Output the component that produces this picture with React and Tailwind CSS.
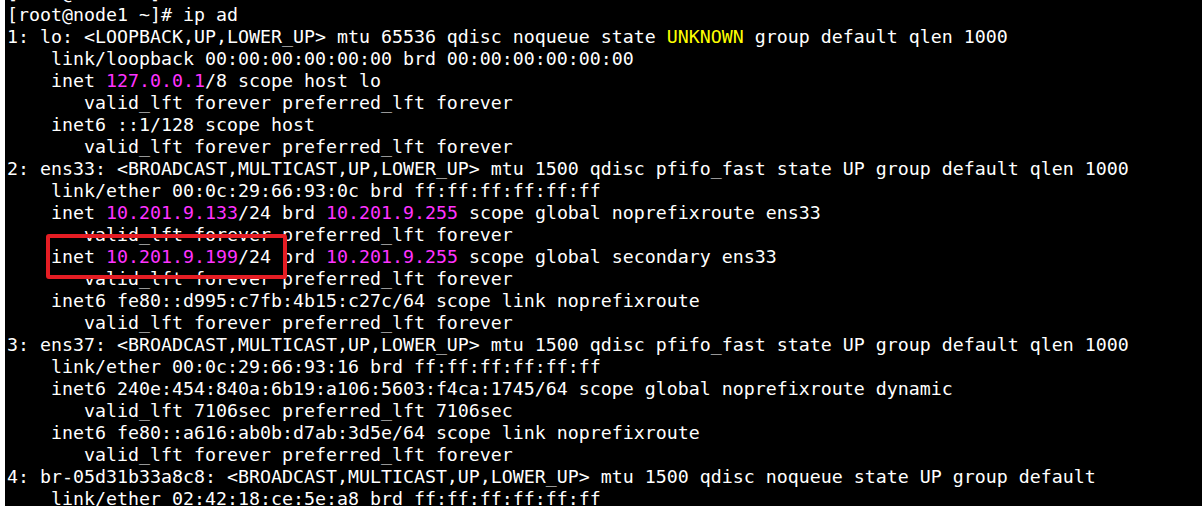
const M = "m";
const Y = "y";

const lines = [
  [["[root@node1 ~]#"]],
  [["[root@node1 ~]# ip ad"]],
  [["1: lo: <LOOPBACK,UP,LOWER_UP> mtu 65536 qdisc noqueue state "], ["UNKNOWN", Y], [" group default qlen 1000"]],
  [["    link/loopback 00:00:00:00:00:00 brd 00:00:00:00:00:00"]],
  [["    inet "], ["127.0.0.1", M], ["/8 scope host lo"]],
  [["       valid_lft forever preferred_lft forever"]],
  [["    inet6 ::1/128 scope host"]],
  [["       valid_lft forever preferred_lft forever"]],
  [["2: ens33: <BROADCAST,MULTICAST,UP,LOWER_UP> mtu 1500 qdisc pfifo_fast state UP group default qlen 1000"]],
  [["    link/ether 00:0c:29:66:93:0c brd ff:ff:ff:ff:ff:ff"]],
  [["    inet "], ["10.201.9.133", M], ["/24 brd "], ["10.201.9.255", M], [" scope global noprefixroute ens33"]],
  [["       valid_lft forever preferred_lft forever"]],
  [["    inet "], ["10.201.9.199", M], ["/24 brd "], ["10.201.9.255", M], [" scope global secondary ens33"]],
  [["       valid_lft forever preferred_lft forever"]],
  [["    inet6 fe80::d995:c7fb:4b15:c27c/64 scope link noprefixroute"]],
  [["       valid_lft forever preferred_lft forever"]],
  [["3: ens37: <BROADCAST,MULTICAST,UP,LOWER_UP> mtu 1500 qdisc pfifo_fast state UP group default qlen 1000"]],
  [["    link/ether 00:0c:29:66:93:16 brd ff:ff:ff:ff:ff:ff"]],
  [["    inet6 240e:454:840a:6b19:a106:5603:f4ca:1745/64 scope global noprefixroute dynamic"]],
  [["       valid_lft 7106sec preferred_lft 7106sec"]],
  [["    inet6 fe80::a616:ab0b:d7ab:3d5e/64 scope link noprefixroute"]],
  [["       valid_lft forever preferred_lft forever"]],
  [["4: br-05d31b33a8c8: <BROADCAST,MULTICAST,UP,LOWER_UP> mtu 1500 qdisc noqueue state UP group default"]],
  [["    link/ether 02:42:18:ce:5e:a8 brd ff:ff:ff:ff:ff:ff"]],
];

function Seg({ text, color }) {
  if (color === M) return <span className="text-[#ff33ff]">{text}</span>;
  if (color === Y) return <span className="text-[#ffff00]">{text}</span>;
  return <span>{text}</span>;
}

export default function App() {
  return (
    <div className="relative flex h-[506px] w-[1202px] overflow-hidden bg-black">
      <div className="w-[5px] shrink-0 bg-white" />
      <div className="-mt-[18px] flex flex-col pl-[2px] font-['DejaVu_Sans_Mono',monospace] text-[18.27px] leading-[22px] text-white">
        {lines.map((line, i) => (
          <div key={i} className="h-[22px] whitespace-pre">
            {line.map(([text, color], j) => (
              <Seg key={j} text={text} color={color} />
            ))}
          </div>
        ))}
      </div>
      {/* annotation box */}
      <div className="absolute left-[46px] top-[234px] h-[45px] w-[241px] rounded-[3px] border-4 border-[#e51d24]" />
    </div>
  );
}
